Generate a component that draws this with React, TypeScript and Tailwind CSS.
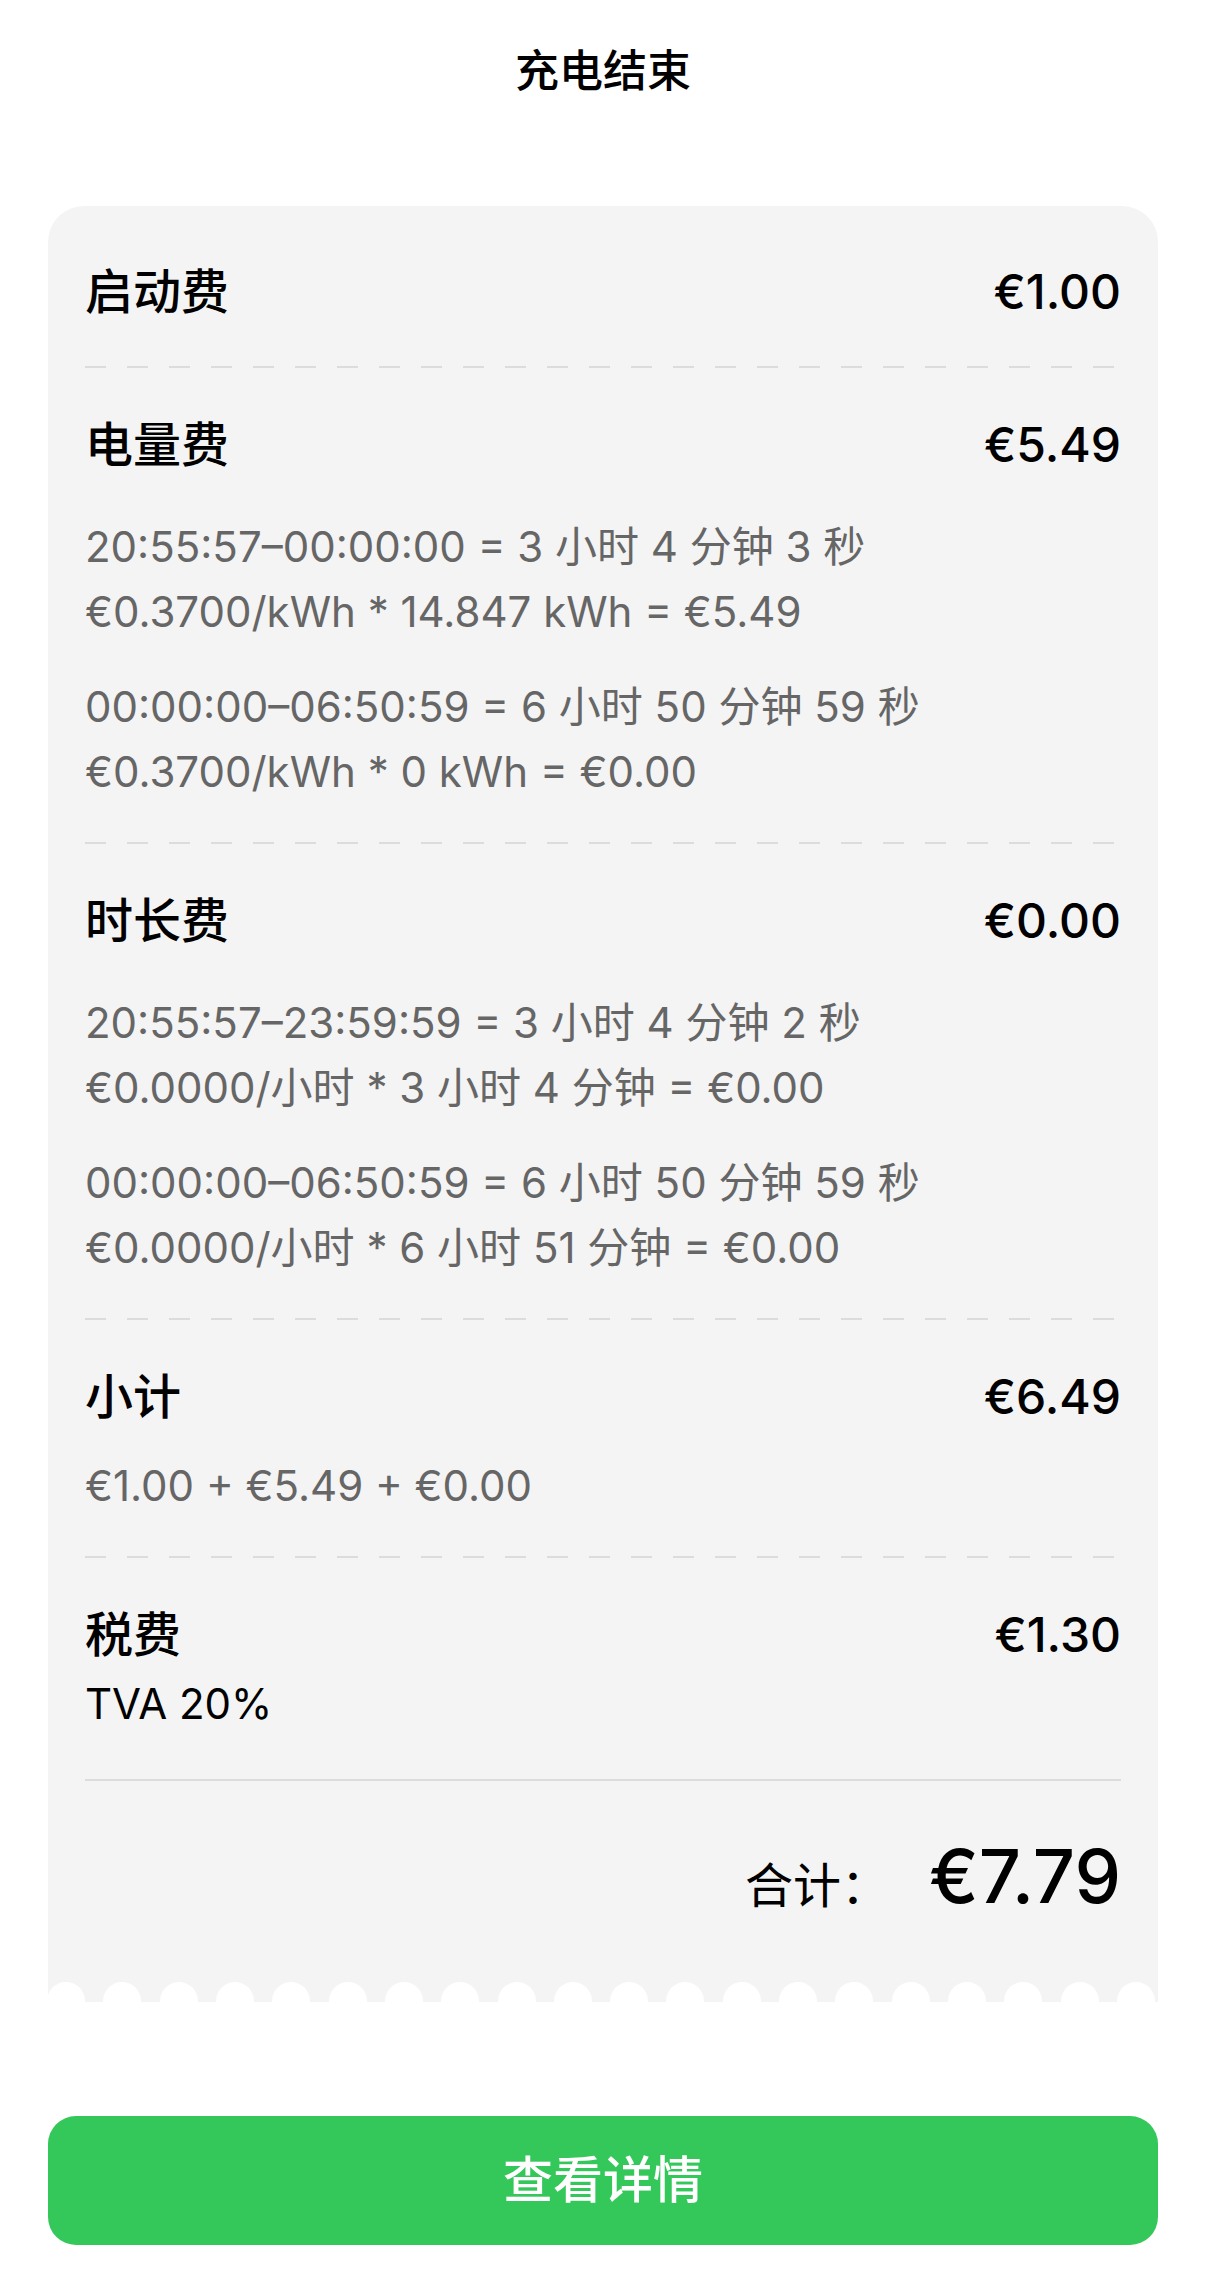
const dashed =
  "h-[2px] bg-[repeating-linear-gradient(to_right,#dcdcdc_0px,#dcdcdc_21px,transparent_21px,transparent_42px)]";

type Section = {
  title: string;
  amount: string;
  groups?: string[][];
  gapTop?: string;
};

const sections: Section[] = [
  {
    title: "电量费",
    amount: "€5.49",
    groups: [
      ["20:55:57–00:00:00 = 3 小时 4 分钟 3 秒", "€0.3700/kWh * 14.847 kWh = €5.49"],
      ["00:00:00–06:50:59 = 6 小时 50 分钟 59 秒", "€0.3700/kWh * 0 kWh = €0.00"],
    ],
  },
  {
    title: "时长费",
    amount: "€0.00",
    groups: [
      ["20:55:57–23:59:59 = 3 小时 4 分钟 2 秒", "€0.0000/小时 * 3 小时 4 分钟 = €0.00"],
      ["00:00:00–06:50:59 = 6 小时 50 分钟 59 秒", "€0.0000/小时 * 6 小时 51 分钟 = €0.00"],
    ],
  },
  {
    title: "小计",
    amount: "€6.49",
    groups: [["€1.00 + €5.49 + €0.00"]],
    gapTop: "mt-[24px]",
  },
];

function Heading({ title, amount }: { title: string; amount: string }) {
  return (
    <div className="flex h-[64px] items-center justify-between leading-[64px] text-black">
      <span className="text-[48px] font-medium">{title}</span>
      <span className="text-[48px] font-medium">{amount}</span>
    </div>
  );
}

function FeeSection({ title, amount, groups = [], gapTop = "mt-[37px]" }: Section) {
  return (
    <>
      <div className={dashed} />
      <div className="pt-[45px] pb-[38px]">
        <Heading title={title} amount={amount} />
        <div className={`${gapTop} flex flex-col gap-[30px]`}>
          {groups.map((lines, i) => (
            <div key={i} className="flex flex-col text-[42px] leading-[65px] text-[#666666]">
              {lines.map((l) => (
                <span key={l} className="whitespace-nowrap">
                  {l}
                </span>
              ))}
            </div>
          ))}
        </div>
      </div>
    </>
  );
}

export default function App() {
  return (
    <div className="min-h-[2291px] bg-white [font-family:Inter,'Noto_Sans_CJK_SC',sans-serif]">
      <header className="flex h-[142px] items-center justify-center text-[44px] font-medium text-black">
        充电结束
      </header>

      <main className="mx-[48px] mt-[64px]">
        {/* receipt card, bottom edge is cut into scallops */}
        <div className="rounded-t-[36px] bg-[#f4f4f4]">
          <div className="px-[37px]">
            <div className="pt-[54px] pb-[42px]">
              <Heading title="启动费" amount="€1.00" />
            </div>

            {sections.map((s) => (
              <FeeSection key={s.title} {...s} />
            ))}

            <div className={dashed} />
            <div className="pt-[45px]">
              <Heading title="税费" amount="€1.30" />
              <div className="mt-[4px] text-[42px] leading-[65px] text-black">TVA 20%</div>
            </div>

            <div className="mt-[43px] h-[2px] bg-[#dcdcdc]" />

            <div className="mt-[55px] flex items-baseline justify-end pb-[56px] text-black">
              <span className="text-[48px] leading-[80px]">合计：</span>
              <span className="ml-[40px] text-[74px] font-medium leading-[80px]">€7.79</span>
            </div>
          </div>

          <div className="h-[20px] overflow-hidden">
            <div className="ml-[-1px] mr-[3px] flex justify-between">
              {Array.from({ length: 20 }).map((_, i) => (
                <div key={i} className="h-[38px] w-[38px] shrink-0 rounded-full bg-white" />
              ))}
            </div>
          </div>
        </div>

        <button className="mt-[114px] flex h-[129px] w-full items-center justify-center rounded-[28px] bg-[#34c759] text-[50px] font-medium text-white">
          查看详情
        </button>
      </main>
    </div>
  );
}
